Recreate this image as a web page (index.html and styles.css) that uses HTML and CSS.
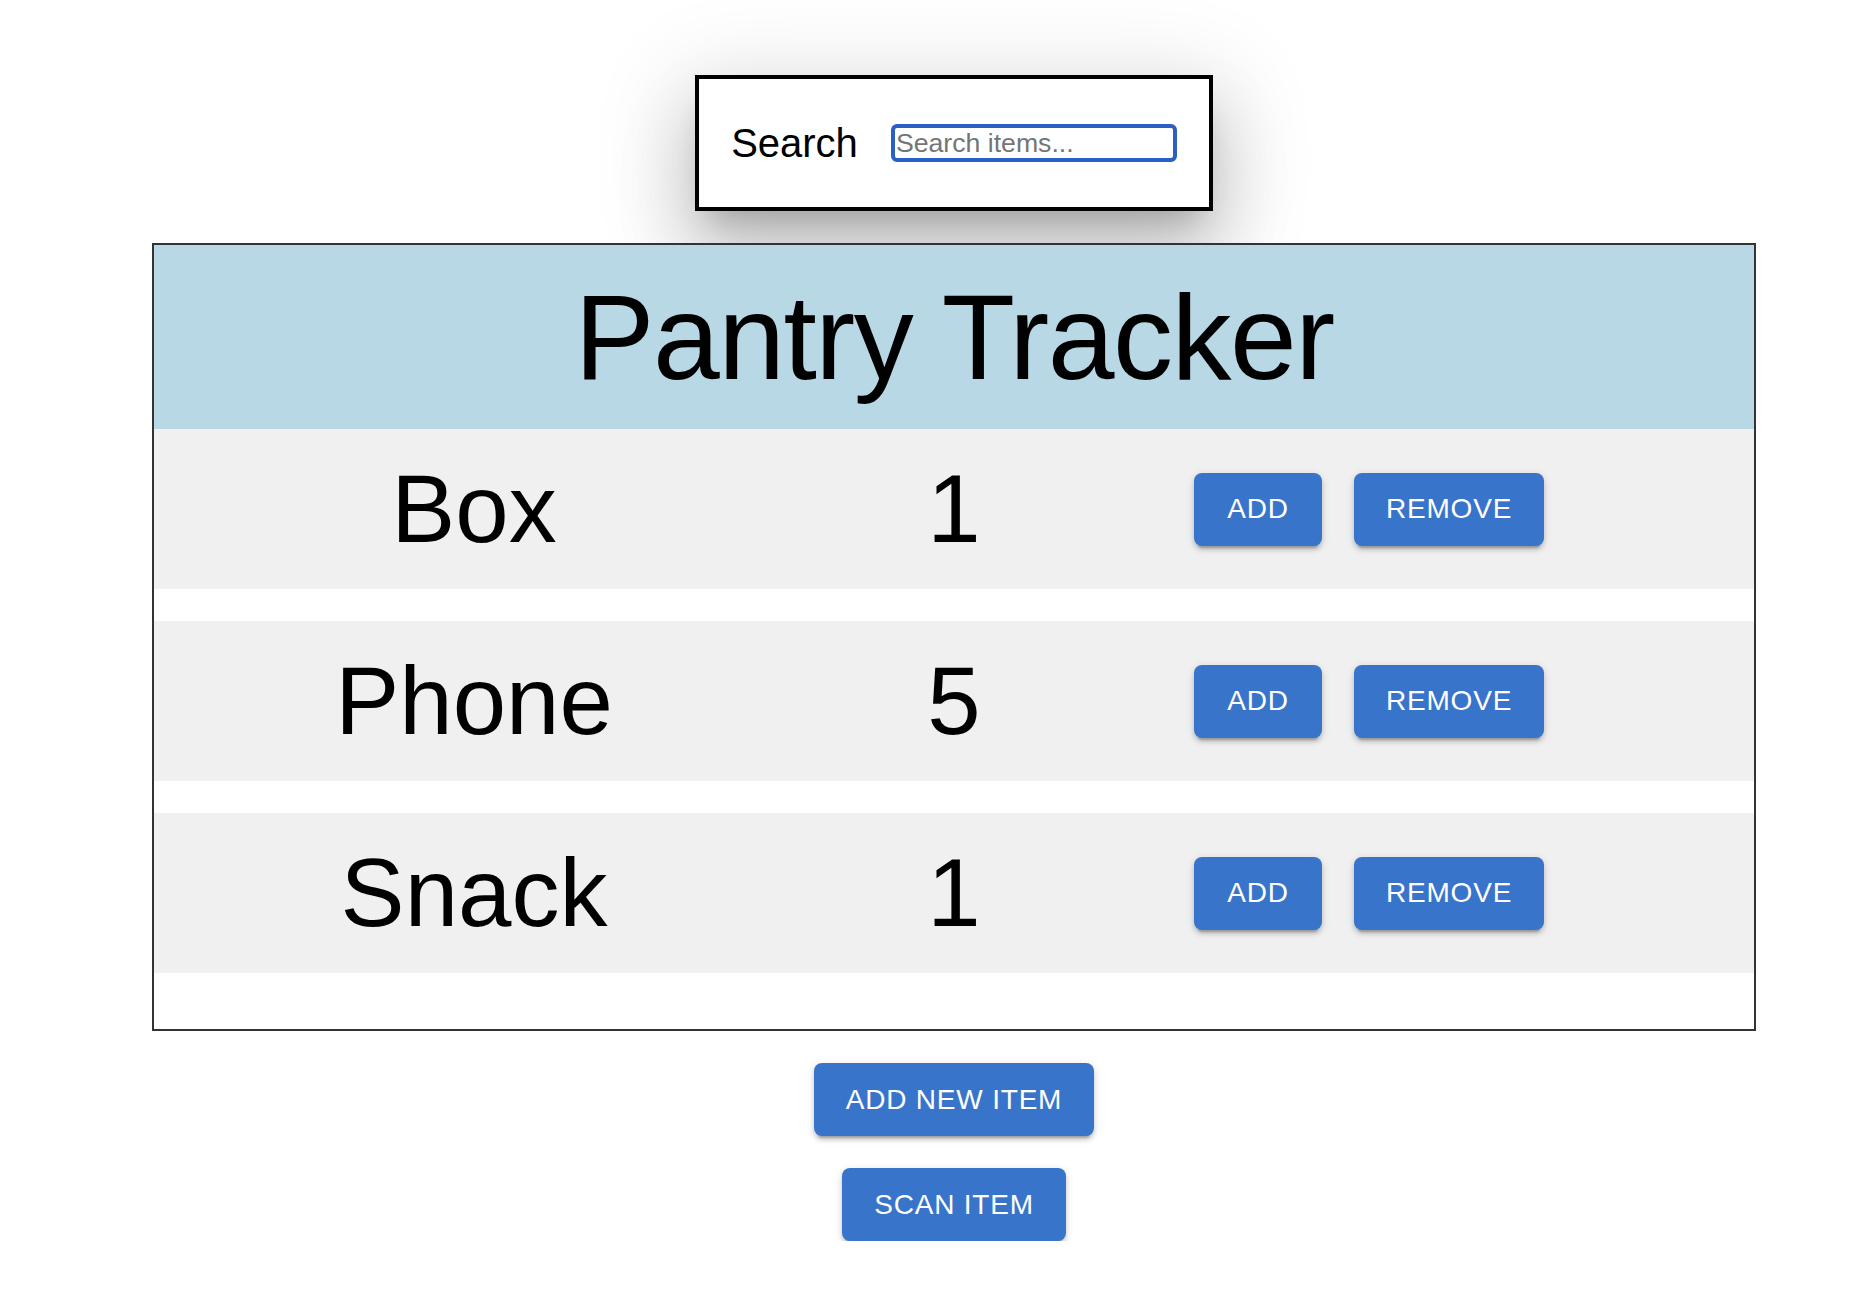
FILE: index.html
```html
<!DOCTYPE html>
<html lang="en">
<head>
<meta charset="utf-8">
<title>Pantry Tracker</title>
<link rel="stylesheet" href="styles.css">
</head>
<body>
<main class="page">
  <div class="search-box">
    <label class="search-label" for="search">Search</label>
    <input id="search" class="search-input" type="text" placeholder="Search items...">
  </div>

  <section class="tracker">
    <header class="tracker-header">
      <h2 class="tracker-title">Pantry Tracker</h2>
    </header>
    <div class="rows">
      <div class="row">
        <div class="cell name">Box</div>
        <div class="cell qty">1</div>
        <div class="actions">
          <button class="btn btn-add">Add</button>
          <button class="btn">Remove</button>
        </div>
      </div>
      <div class="row">
        <div class="cell name">Phone</div>
        <div class="cell qty">5</div>
        <div class="actions">
          <button class="btn btn-add">Add</button>
          <button class="btn">Remove</button>
        </div>
      </div>
      <div class="row">
        <div class="cell name">Snack</div>
        <div class="cell qty">1</div>
        <div class="actions">
          <button class="btn btn-add">Add</button>
          <button class="btn">Remove</button>
        </div>
      </div>
    </div>
  </section>

  <button class="btn">Add New Item</button>
  <button class="btn">Scan Item</button>
</main>
</body>
</html>
```

FILE: styles.css
```css
html, body {
  margin: 0;
  padding: 0;
  background: #ffffff;
}

body {
  font-family: "Liberation Sans", Arial, Helvetica, sans-serif;
  color: #000000;
  padding-top: 75px;
}

.page {
  width: 1604px;
  margin-left: 152px;
  display: flex;
  flex-direction: column;
  align-items: center;
  gap: 32px;
}

/* Search box */
.search-box {
  display: flex;
  align-items: center;
  padding: 41px 32px;
  border: 4px solid #000000;
  background: #ffffff;
  box-shadow: 0 22px 30px -14px rgba(0,0,0,0.2),
              0 48px 76px 6px rgba(0,0,0,0.14),
              0 18px 92px 16px rgba(0,0,0,0.12);
}

.search-label {
  font-size: 40px;
  line-height: 46px;
  margin-right: 33px;
}

.search-input {
  box-sizing: border-box;
  width: 286px;
  height: 38px;
  border: 4px solid #2b5fc6;
  border-radius: 6px;
  padding: 0 1px;
  font-family: "Liberation Sans", Arial, sans-serif;
  font-size: 26.67px;
  color: #000;
  background: #fff;
  outline: none;
}

.search-input::placeholder {
  color: #757575;
}

/* Tracker */
.tracker {
  width: 1600px;
  border: 2px solid #333333;
  background: #ffffff;
}

.tracker-header {
  background: #b7d8e4;
  padding: 20px 0;
}

.tracker-title {
  margin: 0;
  text-align: center;
  font-size: 120px;
  line-height: 144px;
  font-weight: 400;
  letter-spacing: -1.5px;
}

.rows {
  display: flex;
  flex-direction: column;
  gap: 32px;
  padding-bottom: 56px;
}

.row {
  height: 160px;
  background: #f0f0f0;
  display: grid;
  grid-template-columns: 640px 320px 1fr;
  align-items: center;
}

.cell {
  font-size: 96px;
  text-align: center;
}

.actions {
  display: flex;
  gap: 32px;
  padding-left: 80px;
}

/* Buttons */
.btn {
  box-sizing: border-box;
  min-width: 128px;
  height: 73px;
  padding: 0 32px;
  border: none;
  border-radius: 8px;
  background: #3974cb;
  color: #ffffff;
  font-family: "Liberation Sans", Arial, sans-serif;
  font-size: 28px;
  font-weight: 400;
  letter-spacing: 0.8px;
  text-transform: uppercase;
  box-shadow: 0 6px 2px -4px rgba(0,0,0,0.2),
              0 4px 4px 0 rgba(0,0,0,0.14),
              0 2px 10px 0 rgba(0,0,0,0.12);
  cursor: pointer;
}
```
